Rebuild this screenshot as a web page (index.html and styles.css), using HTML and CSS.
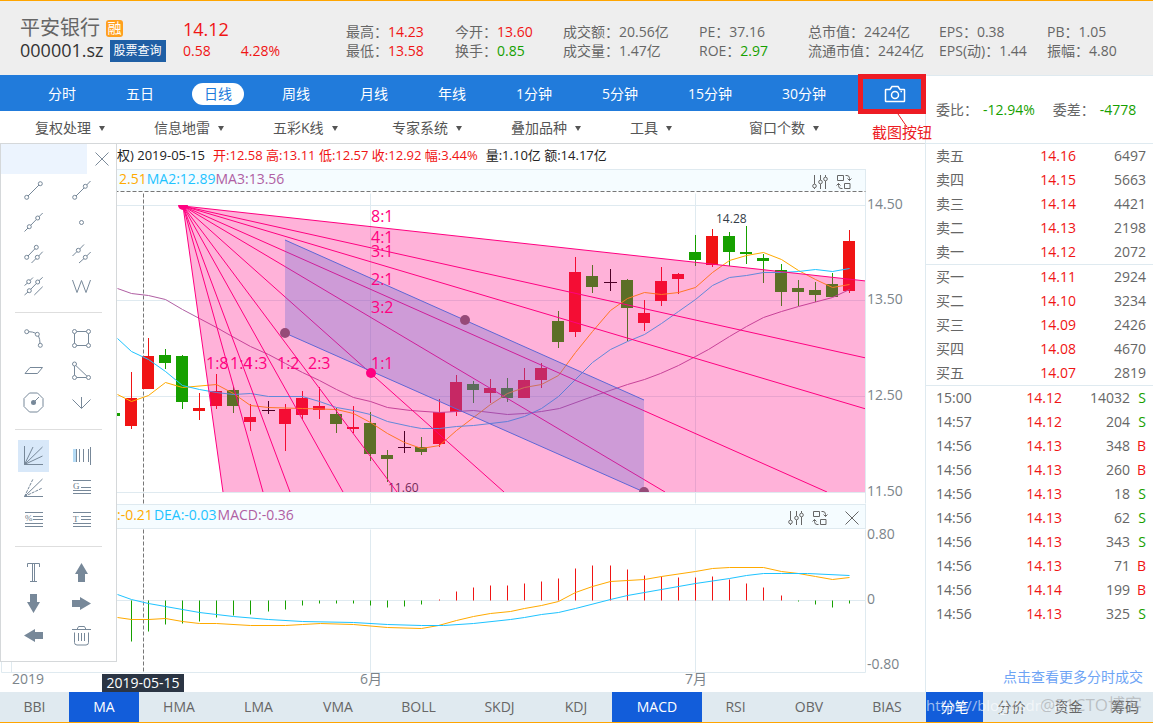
FILE: index.html
```html
<!DOCTYPE html>
<html lang="zh-CN">
<head>
<meta charset="utf-8">
<title>平安银行 000001.sz</title>
<link rel="stylesheet" href="styles.css">
</head>
<body>
<svg class="defs" aria-hidden="true">
  <symbol id="sliders" viewBox="0 0 16 16"><path d="M2.500 1v9M2.500 14v1M8.500 1v5M8.500 10v5M13.500 1v2M13.500 7v8"/><circle cx="2.500" cy="12" r="1.800"/><circle cx="8.500" cy="8" r="1.800"/><circle cx="13.500" cy="5" r="1.800"/></symbol>
  <symbol id="swap" viewBox="0 0 16 16"><path class="thick" d="M1.500 1.500h6v5h-6zM8.500 9.500h5.500v5h-5.500z"/><path class="thick" d="M9.500 1.500h1.500q2.500 0 2.500 3v2M11.500 4.500l2 2 2-2M6.500 14.500H5q-2.500 0-2.500-3v-2M.500 11.500l2-2 2 2"/></symbol>
  <symbol id="cross" viewBox="0 0 16 16"><path d="M1.500 1.500l13 13M14.500 1.500l-13 13"/></symbol>
</svg>

<header class="quote">
  <div class="name">
    <h1>平安银行 <span class="badge">融</span></h1>
    <p class="code">000001.sz <a class="lookup" href="#search">股票查询</a></p>
  </div>
  <div class="price up">
    <strong>14.12</strong>
    <p><span>0.58</span><span>4.28%</span></p>
  </div>
  <div class="stat"><p>最高：<b class="up">14.23</b></p><p>最低：<b class="up">13.58</b></p></div>
  <div class="stat"><p>今开：<b class="up">13.60</b></p><p>换手：<b class="down">0.85</b></p></div>
  <div class="stat"><p>成交额：<b>20.56亿</b></p><p>成交量：<b>1.47亿</b></p></div>
  <div class="stat"><p>PE：<b>37.16</b></p><p>ROE：<b class="down">2.97</b></p></div>
  <div class="stat"><p>总市值：<b>2424亿</b></p><p>流通市值：<b>2424亿</b></p></div>
  <div class="stat"><p>EPS：<b>0.38</b></p><p>EPS(动)：<b>1.44</b></p></div>
  <div class="stat"><p>PB：<b>1.05</b></p><p>振幅：<b>4.80</b></p></div>
</header>

<div class="board">
<main class="left">
  <nav class="periods" aria-label="周期">
    <button>分时</button><button>五日</button><button class="on">日线</button><button>周线</button><button>月线</button><button>年线</button><button>1分钟</button><button>5分钟</button><button>15分钟</button><button>30分钟</button>
    <button class="camera" aria-label="截图">
      <svg width="22" height="18" viewBox="0 0 22 18"><path d="M2 4.500h4l2-3h6l2 3h4q.500 0 .500.500v11q0 .500-.500.500H2q-.500 0-.500-.500V5q0-.500.500-.500z"/><circle cx="11" cy="10" r="3.500"/><path d="M16.500 6.500h1.500"/></svg>
    </button>
    <div class="callout">
      <svg width="20" height="16" viewBox="0 0 20 16"><path d="M2 1l9 13"/></svg>
      <span>截图按钮</span>
    </div>
  </nav>

  <div class="menus">
    <label><select aria-label="复权处理"><option>复权处理</option></select></label>
    <label><select aria-label="信息地雷"><option>信息地雷</option></select></label>
    <label><select aria-label="五彩K线"><option>五彩K线</option></select></label>
    <label><select aria-label="专家系统"><option>专家系统</option></select></label>
    <label><select aria-label="叠加品种"><option>叠加品种</option></select></label>
    <label><select aria-label="工具"><option>工具</option></select></label>
    <label><select aria-label="窗口个数"><option>窗口个数</option></select></label>
  </div>

  <section class="chart">
    <p class="info"><span>权) 2019-05-15</span><span class="up">开:12.58 高:13.11 低:12.57 收:12.92 幅:3.44%</span><span>量:1.10亿 额:14.17亿</span></p>

    <div class="indicator">
      <p><span class="c1">2.51</span><span class="c2">MA2:12.89</span><span class="c3">MA3:13.56</span></p>
      <div class="tools"><button aria-label="参数设置"><svg><use href="#sliders"/></svg></button><button aria-label="切换指标"><svg><use href="#swap"/></svg></button></div>
    </div>

    <svg class="plot" viewBox="0 191 925 313" role="img" aria-label="日K线图">
      <defs><clipPath id="area"><path d="M0 205H865V492H0z"/></clipPath></defs>
      <g transform="translate(.5 .5)">
        <path class="grid" d="M0 205H865M0 300H865M0 396H865M0 492H865M370 193V503M695 193V503M865 191V503"/>
        <path class="dash" d="M0 191H865M143 193V503"/>
      </g>
      <path class="red" d="M131 372h1v57h-1zM125 398h12v28h-12zM148 338h1v51h-1zM142 356h12v33h-12zM199 393h1v27h-1zM193 408h12v3h-12zM216 374h1v35h-1zM210 391h12v15h-12zM250 404h1v27h-1zM244 417h12v5h-12zM285 404h1v47h-1zM279 409h12v15h-12zM302 391h1v28h-1zM296 398h12v17h-12zM319 387h1v32h-1zM313 406h12v4h-12zM353 406h1v27h-1zM347 427h12v2h-12zM439 399h1v48h-1zM433 412h12v32h-12zM456 375h1v41h-1zM450 382h12v30h-12zM490 379h1v24h-1zM484 388h12v5h-12zM524 368h1v30h-1zM518 380h12v18h-12zM541 363h1v25h-1zM535 368h12v12h-12zM575 257h1v80h-1zM569 272h12v60h-12zM644 300h1v31h-1zM638 313h12v10h-12zM661 267h1v39h-1zM655 281h12v20h-12zM678 273h1v21h-1zM672 274h12v5h-12zM712 229h1v38h-1zM706 236h12v29h-12zM849 230h1v63h-1zM843 241h12v50h-12z"/>
      <path class="green" d="M117 413h3v3h-3zM165 349h1v20h-1zM159 355h12v8h-12zM182 355h1v54h-1zM176 356h12v46h-12zM233 386h1v27h-1zM227 390h12v16h-12zM336 408h1v25h-1zM330 414h12v10h-12zM370 412h1v49h-1zM364 423h12v31h-12zM387 450h1v32h-1zM381 455h12v4h-12zM421 437h1v18h-1zM415 447h12v5h-12zM473 381h1v22h-1zM467 384h12v6h-12zM507 378h1v24h-1zM501 388h12v10h-12zM558 311h1v37h-1zM552 321h12v21h-12zM592 265h1v28h-1zM586 276h12v11h-12zM627 279h1v62h-1zM621 280h12v28h-12zM695 235h1v31h-1zM689 252h12v8h-12zM729 232h1v34h-1zM723 236h12v16h-12zM746 226h1v38h-1zM740 252h12v2h-12zM763 254h1v29h-1zM757 258h12v3h-12zM781 264h1v42h-1zM775 270h12v22h-12zM798 280h1v26h-1zM792 288h12v4h-12zM815 282h1v20h-1zM809 290h12v5h-12zM832 273h1v24h-1zM826 284h12v13h-12z"/>
      <path class="black" d="M268 401h1v13h-1zM262 410h13v1h-13zM404 431h1v22h-1zM398 447h13v1h-13zM610 269h1v22h-1zM604 282h13v1h-13z"/>
      <g transform="translate(.5 .5)">
        <polyline class="line l3" points="117,288 131,293 148,295 165,299 182,309 199,318 216,327 230,335 250,346 268,354 285,363 302,372 319,380 336,389 353,397 370,401 387,407 410,410 439,412 456,411 473,410 507,414 524,413 541,411 559,408 592,396 627,384 644,379 660,373 678,365 695,356 708,349 729,336 746,326 763,317 781,311 798,306 832,297 849,289"/>
        <polyline class="line l1" points="117,394 131,401 148,395 165,382 182,387 216,384 233,393 250,405 268,407 302,408 336,409 353,413 370,422 387,433 404,442 421,448 439,445 456,430 473,417 490,404 507,393 524,387 541,384 558,375 575,352 592,331 610,310 627,298 644,292 661,294 678,292 695,287 712,272 729,260 746,255 763,252 781,259 798,270 815,279 832,287 849,284"/>
        <polyline class="line l2" points="117,338 131,351 148,359 165,371 182,385 199,389 216,392 233,394 250,393 268,396 302,396 319,401 336,407 353,410 370,414 387,421 410,426 421,428 439,428 456,426 473,425 507,421 524,416 541,408 558,396 575,379 592,362 610,349 627,341 644,334 661,323 678,311 695,299 712,285 729,277 746,275 763,272 781,272 798,271 815,269 832,271 849,268"/>
      </g>
      <text class="mark" x="716" y="223">14.28</text>
      <text class="mark" x="388" y="492">11.60</text>
      <g clip-path="url(#area)">
        <path class="fan" d="M183 206L866 281V492H223z"/>
        <path class="rays" d="M183 206L866 281M183 206L866 358M183 206L866 409M183 206L827 492M183 206L665 492M183 206L504 492M183 206L397 492M183 206L343 492M183 206L290 492M183 206L263 492M183 206L223 492"/>
        <path class="band" d="M285 240L644 400V492L285 333z"/>
        <path class="band-edge" d="M285 240L644 400M285 333L644 492"/>
        <circle class="knob" cx="285" cy="333" r="5"/><circle class="knob" cx="465" cy="320" r="5"/><circle class="knob" cx="644" cy="492" r="5"/>
        <circle class="pin" cx="183" cy="205" r="5"/><circle class="pin" cx="371" cy="373" r="5"/>
      </g>
      <g class="ratio">
        <text x="371" y="222">8:1</text><text x="371" y="243">4:1</text><text x="371" y="257">3:1</text><text x="371" y="285">2:1</text><text x="371" y="313">3:2</text><text x="371" y="369">1:1</text>
        <text x="206" y="369">1:8</text><text x="230" y="369">1:4</text><text x="245" y="369">1:3</text><text x="277" y="369">1:2</text><text x="308" y="369">2:3</text>
      </g>
      <g class="axis"><text x="867" y="209">14.50</text><text x="867" y="304">13.50</text><text x="867" y="400">12.50</text><text x="867" y="496">11.50</text></g>
    </svg>

    <div class="indicator lower">
      <p><span class="c1">:-0.21</span><span class="c2">DEA:-0.03</span><span class="c3">MACD:-0.36</span></p>
      <div class="tools"><button aria-label="参数设置"><svg><use href="#sliders"/></svg></button><button aria-label="切换指标"><svg><use href="#swap"/></svg></button><button class="shut" aria-label="关闭指标"><svg><use href="#cross"/></svg></button></div>
    </div>

    <svg class="plot" viewBox="0 529 925 163" role="img" aria-label="MACD">
      <g transform="translate(.5 .5)">
        <path class="grid" d="M1 600H865M1 672H865M1 529V672M11 529V672M370 529V672M695 529V672M865 529V672"/>
        <path class="dash" d="M143 529V672"/>
        <path class="bar-down" d="M131 600V641M148 600V631M165 600V624M182 600V623M199 600V621M216 600V617M233 600V615M250 600V614M268 600V611M285 600V609M302 600V605M319 600V603M336 600V603M353 600V603M370 600V605M387 600V607M404 600V606M421 600V604M798 600V601M815 600V604M832 600V607M849 600V603"/>
        <path class="bar-up" d="M439 600V599M456 600V591M473 600V587M490 600V585M507 600V585M524 600V583M541 600V581M558 600V578M575 600V568M592 600V565M610 600V565M627 600V569M644 600V575M661 600V576M678 600V577M695 600V577M712 600V576M729 600V579M746 600V583M763 600V587M781 600V595"/>
        <polyline class="line l1" points="117,617 131,619 148,619 165,618 182,621 199,623 216,623 250,625 285,625 302,624 320,623 353,624 387,627 421,628 438,625 456,620 473,616 490,613 510,611 524,608 541,605 558,601 575,592 592,586 610,581 627,580 644,579 661,576 695,571 712,568 729,567 763,567 781,571 798,573 815,576 832,579 849,577"/>
        <polyline class="line l2" points="117,594 131,599 148,603 165,606 182,609 199,612 233,616 268,619 302,621 353,622 387,624 421,625 443,625 473,623 510,619 524,617 541,614 558,612 575,608 610,599 627,595 644,592 661,589 695,583 729,578 746,575 763,573 781,573 807,573 849,575"/>
      </g>
      <g class="axis"><text x="867" y="539">0.80</text><text x="867" y="604">0</text><text x="867" y="669">-0.80</text><text x="12" y="684">2019</text><text x="360" y="684">6月</text><text x="685" y="684">7月</text></g>
      <path class="tag" d="M102 674h82v18h-82z"/>
      <text class="tag-text" x="143" y="688">2019-05-15</text>
    </svg>

    <aside class="palette" aria-label="画线工具">
      <div class="grip"><button aria-label="关闭"><svg><use href="#cross"/></svg></button></div>
      <div class="group">
        <button aria-label="线段"><svg><path d="M10 22L21 11"/><circle cx="8.700" cy="23.300" r="2"/><circle cx="22.300" cy="9.700" r="2"/></svg></button>
        <button aria-label="射线"><svg><path d="M10 22L18 14M20.700 11L24.500 7"/><circle cx="8.700" cy="23.300" r="2"/><circle cx="19.300" cy="12.300" r="2"/></svg></button>
        <button aria-label="直线"><svg><path d="M6.500 25.500L10 22M12.700 19.300L18.300 13.500M21 10.700L24.700 7"/><circle cx="11.300" cy="20.700" r="2"/><circle cx="19.700" cy="12" r="2"/></svg></button>
        <button aria-label="点"><svg><circle cx="15.500" cy="16.500" r="2"/></svg></button>
        <button aria-label="平行线段"><svg><path d="M10 18L17 10.700M13.500 25l4.500-4.500M20.700 18l4-4.300"/><circle cx="8.700" cy="19.300" r="2"/><circle cx="18.300" cy="9.300" r="2"/><circle cx="19.300" cy="19.300" r="2"/></svg></button>
        <button aria-label="平行直线"><svg><path d="M6.500 18l4.500-4.500M13.700 11L18 6.500M13 25l5-4.500M20.700 18l4-4"/><circle cx="12.300" cy="12.300" r="2"/><circle cx="19.300" cy="19.300" r="2"/></svg></button>
        <button aria-label="三平行线"><svg><path d="M6.500 15.500l3-2.500M12 10.500l3-3M6.500 25l3.500-3M12.700 19.300l5.600-5.800M21 10.700l3.700-3.400M16.300 25l8.400-8.300"/><circle cx="10.700" cy="11.700" r="2"/><circle cx="19.700" cy="12" r="2"/><circle cx="11.300" cy="20.700" r="2"/></svg></button>
        <button aria-label="波浪"><svg><path d="M6.500 10l4.500 12.500 4.500-12 4.500 12L24.500 10"/></svg></button>
      </div>
      <div class="group">
        <button aria-label="弧线"><svg><path d="M10.700 8.700q4 0 6.800 1.500M20.500 13q1.500 3 1.500 7.500"/><circle cx="8.700" cy="8.700" r="2"/><circle cx="19.300" cy="11.300" r="2"/><circle cx="22.300" cy="22.300" r="2"/></svg></button>
        <button aria-label="矩形"><svg><path d="M10.700 8.500h9.600M10.700 22.500h9.600M8.500 10.700v9.600M22.500 10.700v9.600"/><circle cx="8.500" cy="8.500" r="2"/><circle cx="22.500" cy="8.500" r="2"/><circle cx="8.500" cy="22.500" r="2"/><circle cx="22.500" cy="22.500" r="2"/></svg></button>
        <button aria-label="平行四边形"><svg><path d="M7 18.500l5-6h12.500l-5 6z"/></svg></button>
        <button aria-label="三角形"><svg><path d="M8.500 11v9.300M10.700 22.500h9.600M10 10.700l11 10.500"/><circle cx="8.500" cy="9" r="2"/><circle cx="8.500" cy="22.500" r="2"/><circle cx="22.500" cy="22.500" r="2"/></svg></button>
        <button aria-label="圆"><svg><path d="M11.500 6h8l5.500 5.500v8l-5.500 5.500h-8L6 19.500v-8zM15.500 15.500L21 10"/><circle class="solid" cx="15.500" cy="15.500" r="2.500"/></svg></button>
        <button aria-label="箭头线"><svg><path d="M15.500 10v11M6.500 12.500l9 9 9-9"/></svg></button>
      </div>
      <div class="group">
        <button class="on" aria-label="江恩角度线"><svg><path d="M6.500 6v18.500H25M6.500 24.500L15 7M6.500 24.500L24.500 7M6.500 24.500l18-8.500"/></svg></button>
        <button aria-label="斐波那契周期"><svg><path class="sky" d="M7 9h3v13h-3z"/><path d="M10.500 9v13M13.500 9v13M17.500 9v13M22.500 9v13M24.500 7v18"/></svg></button>
        <button aria-label="阻速线"><svg><path d="M6.500 24.500H25M6.500 24.500L24.500 7"/><path stroke-dasharray="3 1" d="M6.500 24.500L15 7M6.500 24.500l18-8.500"/></svg></button>
        <button aria-label="黄金分割"><svg><path d="M7 8.500h18M15 15.500h10M7 18.500h18M7 21.500h18"/><text x="7" y="17">G</text></svg></button>
        <button aria-label="百分比线"><svg><path d="M7 8.500h18M15 12.500h10M15 15.500h10M7 19.500h18M7 22.500h18"/><text x="7" y="17">%</text></svg></button>
        <button aria-label="波段线"><svg><path d="M7 8.500h18M15 12.500h10M15 15.500h10M7 19.500h18M7 22.500h18"/><text x="7" y="18">T</text></svg></button>
      </div>
      <div class="group">
        <button aria-label="文字"><svg><path d="M9.500 10V6.500h12V10M14.500 7v17.500M16.500 7v17.500M12 24.500h7"/></svg></button>
        <button aria-label="向上箭头"><svg><path class="solid" d="M15.500 6L22 17h-3v8h-7v-8H9z"/></svg></button>
        <button aria-label="向下箭头"><svg><path class="solid" d="M15.500 24L9 13h3V5h7v8h3z"/></svg></button>
        <button aria-label="向右箭头"><svg><path class="solid" d="M25 14.500L14 8v3H6v7h8v3z"/></svg></button>
        <button aria-label="向左箭头"><svg><path class="solid" d="M6 14.500L17 8v3h8v7h-8v3z"/></svg></button>
        <button aria-label="删除"><svg><path d="M6 8.500h19M11 8.500l1.500-3h6l1.500 3M8.500 11.500v10q0 2.500 2.500 2.500h9q2.500 0 2.500-2.500v-10M12.500 12v8M15.500 12v8M18.500 12v8"/></svg></button>
      </div>
    </aside>
  </section>

  <nav class="tabs indexes" aria-label="指标">
    <button>BBI</button><button class="on">MA</button><button>HMA</button><button>LMA</button><button>VMA</button><button>BOLL</button><button>SKDJ</button><button>KDJ</button><button class="on">MACD</button><button>RSI</button><button>OBV</button><button>BIAS</button>
  </nav>
</main>

<aside class="right">
  <p class="ratio-row"><span>委比：</span><b class="down">-12.94%</b><span>委差：</span><b class="down">-4778</b></p>
  <table class="depth">
    <tbody>
      <tr><th>卖五</th><td class="up">14.16</td><td>6497</td></tr>
      <tr><th>卖四</th><td class="up">14.15</td><td>5663</td></tr>
      <tr><th>卖三</th><td class="up">14.14</td><td>4421</td></tr>
      <tr><th>卖二</th><td class="up">14.13</td><td>2198</td></tr>
      <tr><th>卖一</th><td class="up">14.12</td><td>2072</td></tr>
    </tbody>
  </table>
  <table class="depth">
    <tbody>
      <tr><th>买一</th><td class="up">14.11</td><td>2924</td></tr>
      <tr><th>买二</th><td class="up">14.10</td><td>3234</td></tr>
      <tr><th>买三</th><td class="up">14.09</td><td>2426</td></tr>
      <tr><th>买四</th><td class="up">14.08</td><td>4670</td></tr>
      <tr><th>买五</th><td class="up">14.07</td><td>2819</td></tr>
    </tbody>
  </table>
  <table class="deals">
    <tbody>
      <tr><th>15:00</th><td class="up">14.12</td><td>14032</td><td class="down">S</td></tr>
      <tr><th>14:57</th><td class="up">14.12</td><td>204</td><td class="down">S</td></tr>
      <tr><th>14:56</th><td class="up">14.13</td><td>348</td><td class="up">B</td></tr>
      <tr><th>14:56</th><td class="up">14.13</td><td>260</td><td class="up">B</td></tr>
      <tr><th>14:56</th><td class="up">14.13</td><td>18</td><td class="down">S</td></tr>
      <tr><th>14:56</th><td class="up">14.13</td><td>62</td><td class="down">S</td></tr>
      <tr><th>14:56</th><td class="up">14.13</td><td>343</td><td class="down">S</td></tr>
      <tr><th>14:56</th><td class="up">14.13</td><td>71</td><td class="up">B</td></tr>
      <tr><th>14:56</th><td class="up">14.14</td><td>199</td><td class="up">B</td></tr>
      <tr><th>14:56</th><td class="up">14.13</td><td>325</td><td class="down">S</td></tr>
    </tbody>
  </table>
  <a class="more" href="#deals">点击查看更多分时成交</a>
  <nav class="tabs views" aria-label="成交">
    <button class="on">分笔</button><button>分价</button><button>资金</button><button>筹码</button>
    <span class="stamp pale">https://blog.csdn.net</span>
    <span class="stamp grey">@51CTO博客</span>
  </nav>
</aside>
</div>
</body>
</html>
```
FILE: styles.css
```css
* { box-sizing: border-box; }

body {
  margin: 0;
  min-height: 100vh;
  display: flex;
  flex-direction: column;
  border-top: 1px solid #ffa500;
  border-bottom: 1px solid #ffa500;
  background: #fff;
  color: #666;
  font: 14px/20px "Open Sans", "Noto Sans CJK SC", sans-serif;
}

h1, p { margin: 0; font-weight: 400; }
b, strong, th { font-weight: 400; }
button { margin: 0; padding: 0; border: 0; background: none; color: inherit; font: inherit; cursor: pointer; }
svg { display: block; }
.defs { position: absolute; width: 0; height: 0; }
.up { color: #f01414; }
.down { color: #16a000; }

/* Quote header */
.quote {
  display: grid;
  grid-template-columns: 163fr 163fr 109fr 108fr 136fr 109fr 131fr 108fr 106fr;
  height: 74px;
  padding-left: 20px;
  background: #eee;
  white-space: nowrap;
}
.name { padding-top: 15px; }
.name h1 { display: flex; align-items: center; gap: 6px; font-size: 20px; line-height: 24px; }
.badge {
  width: 17px;
  height: 17px;
  border-radius: 3px;
  background: #ffa01e;
  color: #fff;
  font-size: 14px;
  line-height: 16px;
  text-align: center;
}
.code { display: flex; align-items: flex-start; gap: 6px; color: #333; font-size: 18px; line-height: 20px; }
.lookup {
  padding: 0 4px;
  background: #1f5fa5;
  color: #fff;
  font-size: 12px;
  line-height: 22px;
  text-decoration: none;
}
.price { padding-top: 16px; }
.price strong { display: block; font-size: 18px; line-height: 24px; }
.price p { display: flex; gap: 30px; line-height: 19px; }
.stat { padding-top: 21px; line-height: 19px; }

.board { flex: 1; display: grid; grid-template-columns: minmax(0, 1fr) 228px; }
.left, .right { display: flex; flex-direction: column; }

/* Period bar */
.periods {
  position: relative;
  display: flex;
  align-items: center;
  gap: 26px;
  height: 36px;
  padding: 2px 0 0 36px;
  background: #217bdb;
  color: #fff;
}
.periods button { padding: 0 12px; border-radius: 11px; line-height: 22px; white-space: nowrap; }
.periods .on { background: #fff; color: #217bdb; }
.periods .camera { margin-left: auto; padding: 0 20px; }
.camera svg { fill: none; stroke: #fff; stroke-width: 1.5; }
.callout {
  position: absolute;
  top: -1px;
  right: -1px;
  z-index: 3;
  width: 68px;
  height: 40px;
  border: 5px solid #ed1c24;
  pointer-events: none;
}
.callout svg { position: absolute; top: 34px; left: 33px; fill: none; stroke: #ed1c24; }
.callout span { position: absolute; top: 43px; left: 9px; color: #ed1c24; font-size: 15px; white-space: nowrap; }

/* Drop-down bar */
.menus {
  display: grid;
  grid-template-columns: repeat(7, 1fr);
  align-items: center;
  height: 33px;
  padding: 2px 57px 0 35px;
  border-bottom: 1px solid #d5d8da;
}
.menus label { display: flex; align-items: center; gap: 8px; }
.menus label::after { content: ""; border: 3px solid transparent; border-top: 5px solid #555; border-bottom: 0; }
.menus select { appearance: none; padding: 0; border: 0; background: none; color: #555; font: inherit; }

/* Chart */
.chart { position: relative; flex: 1; }
.info { display: flex; gap: 8px; height: 25px; padding-left: 117px; color: #222; font-size: 13px; line-height: 22px; white-space: nowrap; }
.indicator {
  display: flex;
  justify-content: space-between;
  height: 22px;
  margin-right: 59px;
  padding: 0 13px 0 119px;
  border: 1px solid #dfeaf0;
  border-width: 1px 1px 0 0;
  background: #f5fcff;
  line-height: 18px;
}
.indicator p { display: flex; }
.indicator.lower { height: 25px; padding: 0 5px 0 117px; border-bottom-width: 1px; line-height: 20px; }
.lower p { gap: 1px; }
.tools { display: flex; align-items: center; gap: 8px; padding-top: 3px; }
.tools svg, .grip svg { width: 16px; height: 16px; fill: none; stroke: #666; }
.tools .thick { stroke-width: 1.4; }
.tools .shut { margin-left: 8px; }
.c1 { color: #ffaa00; }
.c2 { color: #1ec3ff; }
.c3 { color: #b05fa3; }

.plot { width: 100%; height: auto; overflow: visible; }
.grid { fill: none; stroke: #dfeaf0; }
.dash { fill: none; stroke: #777; stroke-dasharray: 4 2; }
.red { fill: #f01414; }
.green { fill: #16a000; }
.black { fill: #000; }
.line { fill: none; stroke-width: 1; }
.l1 { stroke: #ffaa00; }
.l2 { stroke: #1ec3ff; }
.l3 { stroke: #b05fa3; }
.bar-up { stroke: #f01414; }
.bar-down { stroke: #16a000; }
.mark { fill: #333c48; font-size: 12px; }
.fan { fill: #ff0080; fill-opacity: .3; }
.rays { fill: none; stroke: #ff0080; }
.band { fill: #5e67d5; fill-opacity: .3; }
.band-edge { fill: none; stroke: #5e67d5; }
.knob { fill: #964a78; }
.pin { fill: #ff0080; }
.ratio { fill: #ff0080; font-size: 16px; }
.axis { fill: #7c848a; font-size: 14px; }
.tag { fill: #2b3544; }
.tag-text { fill: #fff; font-size: 14px; text-anchor: middle; }

/* Drawing tools */
.palette {
  position: absolute;
  top: 0;
  left: 0;
  z-index: 2;
  width: 117px;
  border: 1px solid #d5d8da;
  border-top: 0;
  background: #fff;
}
.grip { display: flex; justify-content: flex-end; height: 30px; padding-right: 6px; background: linear-gradient(90deg, #ecf4fe 86px, #fff 86px); }
.grip svg { stroke: #7c8b9a; }
.group {
  display: grid;
  grid-template-columns: 31px 31px;
  gap: 0 17px;
  margin: 0 14px;
  padding: 10px 3px;
  border-top: 1px solid #dedede;
}
.grip + .group { padding-top: 0; border-top: 0; }
.group:last-child { padding-bottom: 8px; }
.group .on { background: #d8e8f9; }
.group svg { width: 31px; height: 32px; fill: none; stroke: #778899; }
.group .solid { fill: #778899; stroke: none; }
.group .sky { fill: #b5dbf5; stroke: none; }
.group text { fill: #667788; stroke: none; font: 9px "Liberation Serif", serif; }

/* Bottom tabs */
.tabs { position: relative; display: grid; height: 30px; background: #e0eaf0; }
.tabs button { text-align: center; }
.tabs .on { background: #125dda; color: #fff; }
.indexes { grid-template-columns: 69fr 70fr 80fr 79fr 80fr 81fr 81fr 72fr 90fr 67fr 80fr 76fr; }
.views { grid-template-columns: 57fr 57fr 57fr 56fr; }
.stamp { position: absolute; top: 3px; font-size: 15px; white-space: nowrap; pointer-events: none; }
.pale { left: 0; color: rgba(255, 255, 255, .6); }
.grey { right: 11px; color: rgba(140, 140, 140, .45); font-size: 17px; }

/* Order book */
.right { border-left: 1px solid #dfeaf0; }
.ratio-row { display: flex; align-items: center; height: 69px; padding-left: 10px; border: 1px solid #dfeaf0; border-width: 1px 0; white-space: nowrap; }
.ratio-row b { margin: 0 18px 0 5px; }
.ratio-row b:last-child { margin-right: 0; }
table { width: 100%; table-layout: fixed; border-collapse: collapse; }
th, td { height: 24px; padding: 0; line-height: 24px; text-align: right; }
th { padding-left: 10px; text-align: left; }
.depth { border-bottom: 1px solid #dfeaf0; }
.depth th { width: 80px; }
.depth td:nth-child(2) { width: 70px; }
.depth td:last-child { padding-right: 7px; }
.deals th { width: 80px; }
.deals td:nth-child(2) { width: 56px; }
.deals td:last-child { width: 23px; padding-right: 7px; }
.more { align-self: flex-end; margin: auto 10px 5px 0; color: #6ea4f5; text-decoration: none; }
```
